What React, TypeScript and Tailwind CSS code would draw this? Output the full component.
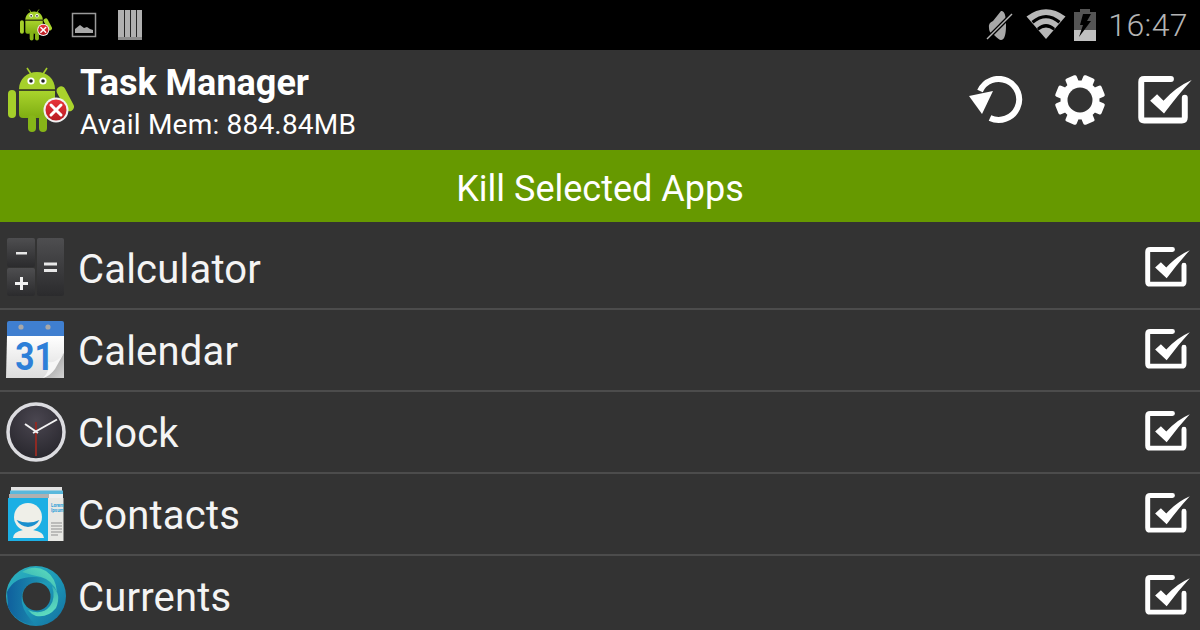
import React from "react";

function Android({ size, id }: { size: number; id: string }) {
  return (
    <svg width={size} height={size} viewBox="0 0 66 66" className="block">
      <defs>
        <linearGradient id={`andr${id}`} x1="0" y1="0" x2="0" y2="1">
          <stop offset="0" stopColor="#a9d32c" />
          <stop offset="1" stopColor="#7fae12" />
        </linearGradient>
        <linearGradient id={`redb${id}`} x1="0" y1="0" x2="0" y2="1">
          <stop offset="0" stopColor="#e8343a" />
          <stop offset="1" stopColor="#b81c22" />
        </linearGradient>
      </defs>
      <path d="M19 1 L23 7 M39 1 L35 7" stroke="#a5cf2a" strokeWidth="1.600" />
      <path d="M11 22 C11 12 19 5 29 5 C39 5 47 12 47 22 Z" fill="#a5d02b" />
      <circle cx="23" cy="14" r="3.600" fill="#fff" />
      <circle cx="23" cy="14" r="1.800" fill="#222" />
      <circle cx="35" cy="14" r="3.600" fill="#fff" />
      <circle cx="35" cy="14" r="1.800" fill="#222" />
      <rect x="11" y="22" width="36" height="1.500" fill="#4d5a1c" />
      <path d="M11 24 H47 V47 Q47 51 43 51 H15 Q11 51 11 47 Z" fill={`url(#andr${id})`} />
      <rect x="0" y="23" width="8" height="28" rx="4" fill="#a5cf2a" />
      <rect x="20" y="48" width="8" height="17" rx="4" fill="#86b518" />
      <rect x="31" y="48" width="8" height="17" rx="4" fill="#86b518" />
      <rect x="0" y="0" width="9" height="27" rx="4.500" fill="#a9d32c" transform="translate(47 22) rotate(-28)" />
      <circle cx="48" cy="43" r="12.500" fill="#f2f2f2" />
      <circle cx="48" cy="43" r="10.500" fill={`url(#redb${id})`} />
      <path d="M43 38 L53 48 M53 38 L43 48" stroke="#fff" strokeWidth="3" strokeLinecap="round" />
    </svg>
  );
}

function Picture() {
  return (
    <svg width="26" height="26" viewBox="0 0 26 26" className="block">
      <rect x="1.500" y="1.500" width="23" height="23" fill="none" stroke="#9a9a9a" strokeWidth="1.500" />
      <path d="M4 21 V17 L9 13 L13 16 L16 15 L19 17 L22 18 V21 Z" fill="#a8a8a8" />
    </svg>
  );
}

function Books() {
  return (
    <svg width="26" height="32" viewBox="0 0 26 32" className="block">
      <path d="M1 1 H7 V30 H1 Z M7.800 1 H13 V30 H7.800 Z M13.800 1 H19 V30 H13.800 Z M19.800 1 H25 V30 H19.800 Z" fill="#b0b0b0" />
      <path d="M1 28 H25 V31 H1 Z" fill="#8c8c8c" />
    </svg>
  );
}

function Muted() {
  return (
    <svg width="28" height="34" viewBox="0 0 28 34" className="block">
      <path d="M3 20 Q2 15 7 13 L15 3 Q20 2 20 17 Q20 32 15 32 Q13 32 7 26 Q3 25 3 20 Z" fill="#a8a8a8" />
      <path d="M1 31 L26 6" stroke="#000" strokeWidth="4" />
      <path d="M1 31 L26 6" stroke="#b4b4b4" strokeWidth="1.500" />
    </svg>
  );
}

function Wifi() {
  return (
    <svg width="40" height="32" viewBox="0 0 40 32" className="block">
      <path d="M20 30 L0.500 7.500 Q20 -7 39.500 7.500 Z" fill="#b8b8b8" />
      <path d="M5.500 12 Q20 0 34.500 12 L32.500 14.500 Q20 4 7.500 14.500 Z" fill="#000" />
      <path d="M11 19 Q20 11 29 19 L27.500 21.500 Q20 15.500 12.500 21.500 Z" fill="#000" />
    </svg>
  );
}

function Battery() {
  return (
    <svg width="22" height="32" viewBox="0 0 22 32" className="block">
      <rect x="6" y="0" width="10" height="3" fill="#555555" />
      <rect x="0" y="3" width="22" height="18" fill="#555555" />
      <rect x="0" y="21" width="22" height="11" fill="#c0c0c0" />
      <path d="M9 5 L17 5 L13 12 H17 L5 28 L9 16 H6 Z" fill="#000" />
    </svg>
  );
}

function Refresh() {
  return (
    <svg width="56" height="48" viewBox="0 0 56 48" className="block">
      <path d="M11 15 A20.500 20.500 0 1 1 21 42" fill="none" stroke="#fff" strokeWidth="6" />
      <path d="M0 20 L24 15 L13 38 Z" fill="#fff" />
    </svg>
  );
}

function Gear() {
  return (
    <svg width="52" height="50" viewBox="0 0 52 50" className="block">
      <g fill="#fff">
        {[0, 45, 90, 135].map((a) => (
          <rect key={a} x="20" y="0" width="12" height="50" rx="2" transform={`rotate(${a + 22.5} 26 25)`} />
        ))}
        <circle cx="26" cy="25" r="19.500" />
      </g>
      <circle cx="26" cy="25" r="12.500" fill="#333333" />
    </svg>
  );
}

function Check({ size }: { size: number }) {
  return (
    <svg width={size} height={size * 0.88} viewBox="0 0 54 48" className="block">
      <path
        d="M33 3 H6 Q3 3 3 6 V42 Q3 45 6 45 H44 Q47 45 47 42 V22"
        fill="none"
        stroke="#fff"
        strokeWidth="6"
        strokeLinecap="round"
      />
      <path d="M12 25 L19 18.500 L25.500 25 Q38 11 54 4 Q40 19 26 38 Z" fill="#fff" />
    </svg>
  );
}

function Calculator() {
  return (
    <svg width="60" height="60" viewBox="0 0 60 60" className="block">
      <defs>
        <linearGradient id="calc" x1="0" y1="0" x2="0" y2="1">
          <stop offset="0" stopColor="#4e4e50" />
          <stop offset="1" stopColor="#2b2b2d" />
        </linearGradient>
      </defs>
      <rect x="1" y="0" width="28" height="29" rx="2" fill="url(#calc)" />
      <rect x="1" y="30" width="28" height="28" rx="2" fill="url(#calc)" />
      <rect x="31" y="0" width="27" height="58" rx="2" fill="url(#calc)" />
      <rect x="10" y="14" width="11" height="2.500" fill="#e8e8e8" />
      <path d="M14 39 h3 v5 h5 v3 h-5 v5 h-3 v-5 h-5 v-3 h5 Z" fill="#f2f2f2" />
      <rect x="38" y="24.500" width="13" height="3" fill="#e8e8e8" />
      <rect x="38" y="31" width="13" height="3" fill="#e8e8e8" />
    </svg>
  );
}

function Calendar() {
  return (
    <svg width="60" height="60" viewBox="0 0 60 60" className="block">
      <defs>
        <linearGradient id="page" x1="0" y1="0" x2="0" y2="1">
          <stop offset="0" stopColor="#ffffff" />
          <stop offset="1" stopColor="#dcdcdc" />
        </linearGradient>
        <linearGradient id="fold" x1="0" y1="0" x2="1" y2="1">
          <stop offset="0" stopColor="#8f8f8f" />
          <stop offset="1" stopColor="#d4d4d4" />
        </linearGradient>
      </defs>
      <path d="M3 1 H56 Q58 1 58 3 V16 H1 V3 Q1 1 3 1 Z" fill="#3f7fd0" />
      <path d="M1 16 H58 V58 H0 Z" fill="url(#page)" />
      <text
        x="0"
        y="0"
        transform="translate(28.500 49.500) scale(0.86 1)"
        textAnchor="middle"
        fill="#2d7fd8"
        fontFamily="Roboto, sans-serif"
        fontWeight="700"
        fontSize="39"
      >
        31
      </text>
      <path d="M58 33 L38 58 H58 Z" fill="url(#fold)" />
      <path d="M58 33 Q50 44 42 42 Q45 50 37 58 Q44 56 49 49 Z" fill="#f6f6f6" />
      <circle cx="15" cy="7" r="2.600" fill="#a8a8a8" />
      <circle cx="42" cy="7" r="2.600" fill="#a8a8a8" />
    </svg>
  );
}

function Clock() {
  return (
    <svg width="60" height="60" viewBox="0 0 60 60" className="block">
      <defs>
        <radialGradient id="face" cx="0.500" cy="0.300" r="0.800">
          <stop offset="0" stopColor="#4a4650" />
          <stop offset="1" stopColor="#232228" />
        </radialGradient>
      </defs>
      <circle cx="30" cy="30" r="28" fill="url(#face)" stroke="#dcdce0" strokeWidth="3.500" />
      <path d="M30 20 V54" stroke="#8e2a24" strokeWidth="2" />
      <path d="M19 22 L32 31" stroke="#f4f4f4" strokeWidth="2" />
      <path d="M27 31 L51 17.500" stroke="#f4f4f4" strokeWidth="2" />
    </svg>
  );
}

function Contacts() {
  return (
    <svg width="60" height="60" viewBox="0 0 60 60" className="block">
      <rect x="5" y="3" width="51" height="4" fill="#e2e2e2" />
      <rect x="4" y="6.500" width="53" height="4" fill="#5ab8dc" />
      <rect x="3" y="10" width="40" height="4.500" fill="#b0b0b0" />
      <rect x="43" y="10" width="14" height="4.500" fill="#efefef" />
      <rect x="2" y="14" width="40" height="43" fill="#1cafe4" />
      <rect x="42" y="14" width="15.500" height="43" fill="#e8e8e4" />
      <text x="45" y="23" fill="#2f9fd8" fontFamily="Roboto, sans-serif" fontSize="4.500" fontWeight="700">
        Lorem
      </text>
      <text x="45" y="28" fill="#2f9fd8" fontFamily="Roboto, sans-serif" fontSize="4.500" fontWeight="700">
        Ipsum
      </text>
      <path d="M45 39 H56 M45 42 H56 M45 45 H56 M45 48 H56 M45 51 H52" stroke="#8f8f8f" strokeWidth="1" />
      <circle cx="22" cy="33" r="14" fill="#efefe8" />
      <path d="M10.500 36 Q22 41 33.500 36 Q30 42 22 43 Q14 42 10.500 36 Z" fill="#1a8fce" />
      <path d="M7 54 Q7 48 17 46 H27 Q38 48 38 54 Z" fill="#efefe8" />
    </svg>
  );
}

function Currents() {
  return (
    <svg width="60" height="60" viewBox="0 0 60 60" className="block">
      <defs>
        <linearGradient id="cur1" x1="0" y1="0" x2="1" y2="1">
          <stop offset="0" stopColor="#2fb4bf" />
          <stop offset="0.500" stopColor="#1d9ab8" />
          <stop offset="1" stopColor="#136fa0" />
        </linearGradient>
        <linearGradient id="cur2" x1="0" y1="0" x2="1" y2="0">
          <stop offset="0" stopColor="#0f5f9d" />
          <stop offset="1" stopColor="#23a4b8" />
        </linearGradient>
        <linearGradient id="cur3" x1="0.300" y1="0" x2="0.700" y2="1">
          <stop offset="0" stopColor="#2fa8b0" />
          <stop offset="1" stopColor="#62e0c0" />
        </linearGradient>
        <linearGradient id="cur4" x1="1" y1="0" x2="0" y2="1">
          <stop offset="0" stopColor="#62e0bd" />
          <stop offset="1" stopColor="#2aa8b4" />
        </linearGradient>
      </defs>
      <circle cx="30" cy="30" r="30" fill="url(#cur1)" />
      <path d="M1 26 Q8 10 30 11 Q44 11 49 22 Q40 14 27 17 Q14 21 16 37 Q18 48 30 59 Q10 58 2 41 Z" fill="url(#cur2)" />
      <path d="M16 6 Q28 -2 40 5 Q50 12 51 26 Q46 14 35 11 Q25 9 16 6 Z" fill="url(#cur4)" />
      <path d="M22 44 Q36 50 44 40 Q50 32 46 20 Q56 28 50 42 Q42 52 30 50 Q25 48 22 44 Z" fill="url(#cur3)" />
      <circle cx="30.500" cy="30.500" r="14" fill="#333333" />
    </svg>
  );
}

const apps = [
  { name: "Calculator", icon: <Calculator /> },
  { name: "Calendar", icon: <Calendar /> },
  { name: "Clock", icon: <Clock /> },
  { name: "Contacts", icon: <Contacts /> },
  { name: "Currents", icon: <Currents /> },
];

export default function App() {
  return (
    <div className="w-[1200px] h-[630px] overflow-hidden bg-[#333333] text-white font-['Roboto',sans-serif]">
      <div className="h-[50px] bg-black flex items-center pl-[20px] pr-[12px]">
        <Android size={32} id="s" />
        <div className="ml-[19px]">
          <Picture />
        </div>
        <div className="ml-[20px]">
          <Books />
        </div>
        <div className="ml-auto flex items-center">
          <Muted />
          <div className="ml-[12px]">
            <Wifi />
          </div>
          <div className="ml-[8px]">
            <Battery />
          </div>
          <span className="ml-[12px] text-[32px] tracking-[0.4px] leading-none font-light text-[#b4b4b4]">16:47</span>
        </div>
      </div>

      <div className="h-[100px] flex items-center pl-[8px] pr-[8px]">
        <Android size={66} id="l" />
        <div className="ml-[6px] self-start pt-[12px] flex flex-col">
          <span className="text-[36px] leading-[42px] font-bold">Task Manager</span>
          <span className="text-[28px] leading-[42px] tracking-[0.2px]">Avail Mem: 884.84MB</span>
        </div>
        <div className="ml-auto flex items-center">
          <Refresh />
          <div className="ml-[29px]">
            <Gear />
          </div>
          <div className="ml-[32px]">
            <Check size={54} />
          </div>
        </div>
      </div>

      <div className="h-[72px] bg-[#669900] flex items-center justify-center pt-[6px] text-[36px]">
        Kill Selected Apps
      </div>

      <div className="pt-[6px]">
        {apps.map((a) => (
          <div
            key={a.name}
            className="h-[82px] border-b-2 border-[#4c4c4c] flex items-center pl-[6px] pr-[10px]"
          >
            {a.icon}
            <span className="ml-[12px] pt-[4px] text-[40px] leading-none tracking-[0.2px] text-[#f4f4f4]">
              {a.name}
            </span>
            <div className="ml-auto mb-[2px]">
              <Check size={45} />
            </div>
          </div>
        ))}
      </div>
    </div>
  );
}
